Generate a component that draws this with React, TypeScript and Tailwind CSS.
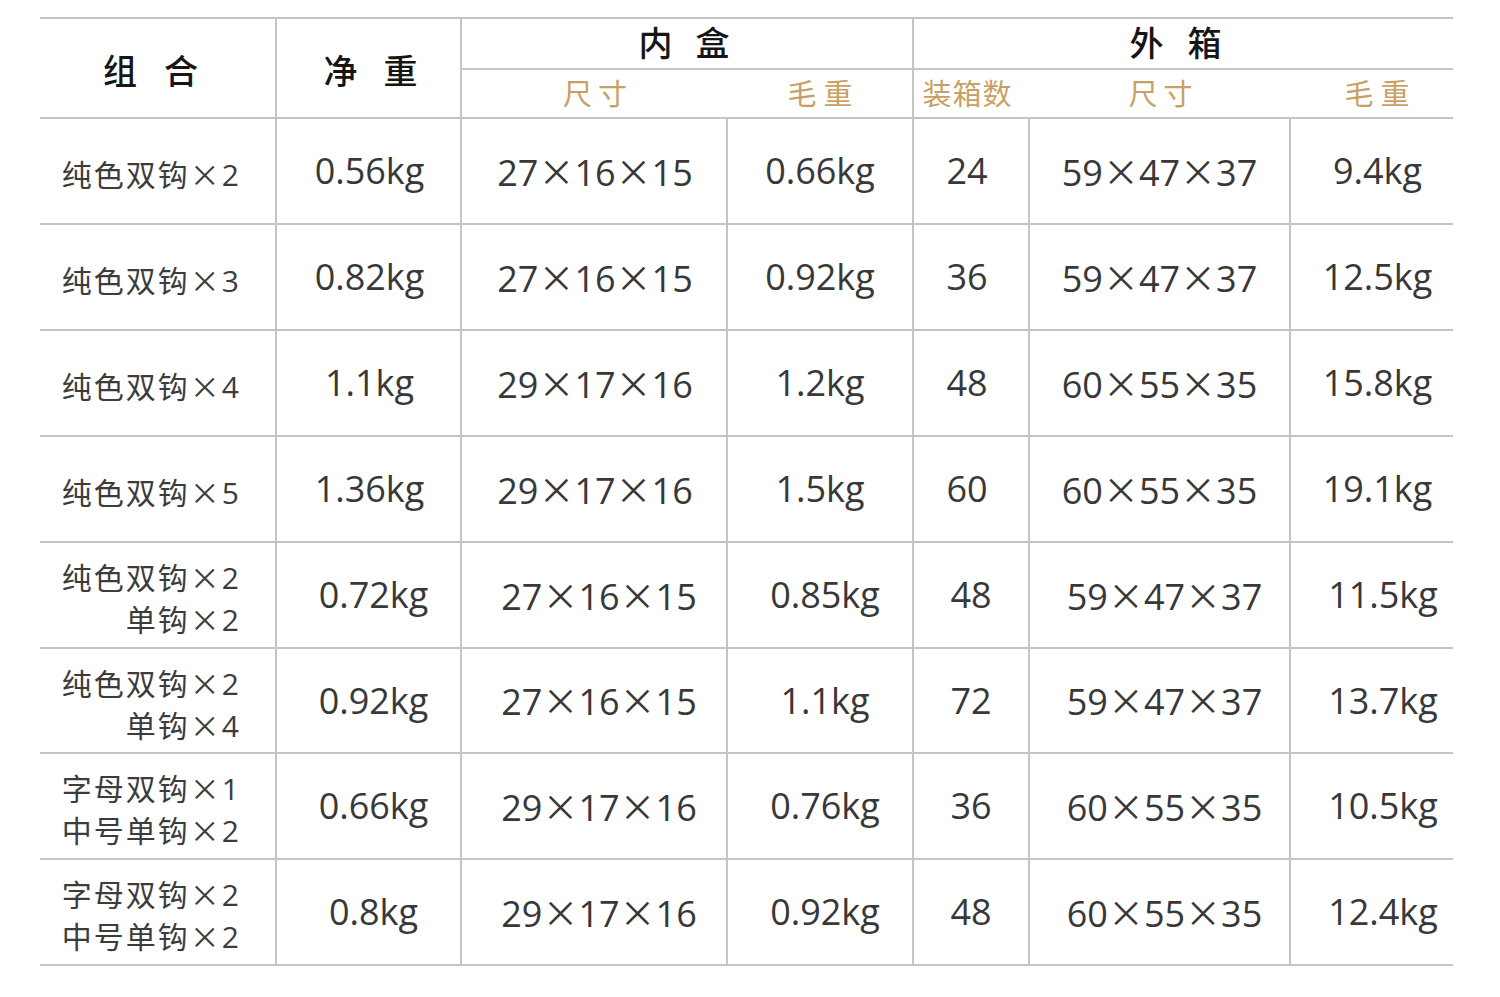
import React from "react";

type Row = {
  combo: string[];
  net: string;
  innerSize: string;
  innerGross: string;
  count: string;
  outerSize: string;
  outerGross: string;
  h: number;
  shift?: boolean;
};

const ROWS: Row[] = [
  { combo: ["纯色双钩×2"], net: "0.56kg", innerSize: "27×16×15", innerGross: "0.66kg", count: "24", outerSize: "59×47×37", outerGross: "9.4kg", h: 106 },
  { combo: ["纯色双钩×3"], net: "0.82kg", innerSize: "27×16×15", innerGross: "0.92kg", count: "36", outerSize: "59×47×37", outerGross: "12.5kg", h: 106 },
  { combo: ["纯色双钩×4"], net: "1.1kg", innerSize: "29×17×16", innerGross: "1.2kg", count: "48", outerSize: "60×55×35", outerGross: "15.8kg", h: 106 },
  { combo: ["纯色双钩×5"], net: "1.36kg", innerSize: "29×17×16", innerGross: "1.5kg", count: "60", outerSize: "60×55×35", outerGross: "19.1kg", h: 106 },
  { combo: ["纯色双钩×2", "单钩×2"], net: "0.72kg", innerSize: "27×16×15", innerGross: "0.85kg", count: "48", outerSize: "59×47×37", outerGross: "11.5kg", h: 106, shift: true },
  { combo: ["纯色双钩×2", "单钩×4"], net: "0.92kg", innerSize: "27×16×15", innerGross: "1.1kg", count: "72", outerSize: "59×47×37", outerGross: "13.7kg", h: 105, shift: true },
  { combo: ["字母双钩×1", "中号单钩×2"], net: "0.66kg", innerSize: "29×17×16", innerGross: "0.76kg", count: "36", outerSize: "60×55×35", outerGross: "10.5kg", h: 106, shift: true },
  { combo: ["字母双钩×2", "中号单钩×2"], net: "0.8kg", innerSize: "29×17×16", innerGross: "0.92kg", count: "48", outerSize: "60×55×35", outerGross: "12.4kg", h: 106, shift: true },
];

// the × in the picture is the wide CJK glyph, not the latin one
function Times({ text }: { text: string }) {
  const parts = text.split("×");
  return (
    <>
      {parts.map((p, i) => (
        <React.Fragment key={i}>
          {i > 0 && <span className="font-['Noto_Sans_CJK_SC',sans-serif] font-normal">×</span>}
          {p}
        </React.Fragment>
      ))}
    </>
  );
}

const line = "border-[#c4c4c4]";

function HeadChars({ chars, gap, className }: { chars: string[]; gap: string; className: string }) {
  return (
    <div className={`flex ${gap} ${className}`}>
      {chars.map((c) => (
        <span key={c}>{c}</span>
      ))}
    </div>
  );
}

function Cell({ children, right, pad = "" }: { children: React.ReactNode; right?: boolean; pad?: string }) {
  return (
    <div
      className={`flex items-center justify-center border-b-2 ${line} ${right ? "border-r-2" : ""} ${pad} text-[36px] font-medium leading-none text-[#383838]`}
    >
      <span className="whitespace-nowrap">{children}</span>
    </div>
  );
}

export default function App() {
  const rowsTemplate = ["51px", "49px", ...ROWS.map((r) => `${r.h}px`)].join(" ");

  return (
    <div className="min-h-[997px] w-[1500px] bg-white font-['Open_Sans','Noto_Sans_CJK_SC',sans-serif]">
      <div className="pt-[17px] pl-[40px]">
        <div
          className={`grid w-[1413px] grid-cols-[237px_185px_266px_186px_116px_261px_162px] border-t-2 ${line}`}
          style={{ gridTemplateRows: rowsTemplate }}
        >
          {/* header */}
          <div className={`row-span-2 flex items-center justify-center border-b-2 border-r-2 ${line} pt-[6px] pr-[14px]`}>
            <HeadChars chars={["组", "合"]} gap="gap-[27px]" className="text-[34px] font-medium text-[#161616]" />
          </div>
          <div className={`row-span-2 flex items-center justify-center border-b-2 border-r-2 ${line} pt-[6px] pl-[4px]`}>
            <HeadChars chars={["净", "重"]} gap="gap-[26px]" className="text-[34px] font-medium text-[#161616]" />
          </div>
          <div className={`col-span-2 flex items-center justify-center border-b-2 border-r-2 ${line} pr-[6px]`}>
            <HeadChars chars={["内", "盒"]} gap="gap-[23px]" className="text-[34px] font-medium text-[#161616]" />
          </div>
          <div className={`col-span-3 flex items-center justify-center border-b-2 ${line} pr-[16px]`}>
            <HeadChars chars={["外", "箱"]} gap="gap-[24px]" className="text-[34px] font-medium text-[#161616]" />
          </div>

          <div className={`flex items-center justify-center border-b-2 ${line}`}>
            <HeadChars chars={["尺", "寸"]} gap="gap-[6px]" className="text-[29px] text-[#c9a064]" />
          </div>
          <div className={`flex items-center justify-center border-b-2 border-r-2 ${line}`}>
            <HeadChars chars={["毛", "重"]} gap="gap-[7px]" className="text-[29px] text-[#c9a064]" />
          </div>
          <div className={`flex items-center justify-center border-b-2 ${line} pr-[10px]`}>
            <HeadChars chars={["装", "箱", "数"]} gap="gap-[1px]" className="text-[29px] text-[#c9a064]" />
          </div>
          <div className={`flex items-center justify-center border-b-2 ${line}`}>
            <HeadChars chars={["尺", "寸"]} gap="gap-[6px]" className="text-[29px] text-[#c9a064]" />
          </div>
          <div className={`flex items-center justify-center border-b-2 ${line} pl-[10px]`}>
            <HeadChars chars={["毛", "重"]} gap="gap-[7px]" className="text-[29px] text-[#c9a064]" />
          </div>

          {/* rows */}
          {ROWS.map((r, i) => (
            <React.Fragment key={i}>
              <div
                className={`flex flex-col items-end justify-center border-b-2 border-r-2 ${line} pr-[34px] pt-[6px] text-[30px] leading-[40px] tracking-[2px] text-[#3c3c3c]`}
              >
                {r.combo.map((c) => (
                  <span key={c} className="whitespace-nowrap">
                    <Times text={c} />
                  </span>
                ))}
              </div>
              <Cell right pad={r.shift ? "pl-[10px]" : "pl-[2px]"}>{r.net}</Cell>
              <Cell right pad={r.shift ? "pl-[10px]" : "pl-[2px]"}>
                <Times text={r.innerSize} />
              </Cell>
              <Cell right pad={r.shift ? "pl-[10px]" : ""}>{r.innerGross}</Cell>
              <Cell right pad={r.shift ? "" : "pr-[8px]"}>{r.count}</Cell>
              <Cell right pad={r.shift ? "pl-[10px]" : ""}>
                <Times text={r.outerSize} />
              </Cell>
              <Cell pad={r.shift ? "pl-[22px]" : "pl-[11px]"}>{r.outerGross}</Cell>
            </React.Fragment>
          ))}
        </div>
      </div>
    </div>
  );
}
